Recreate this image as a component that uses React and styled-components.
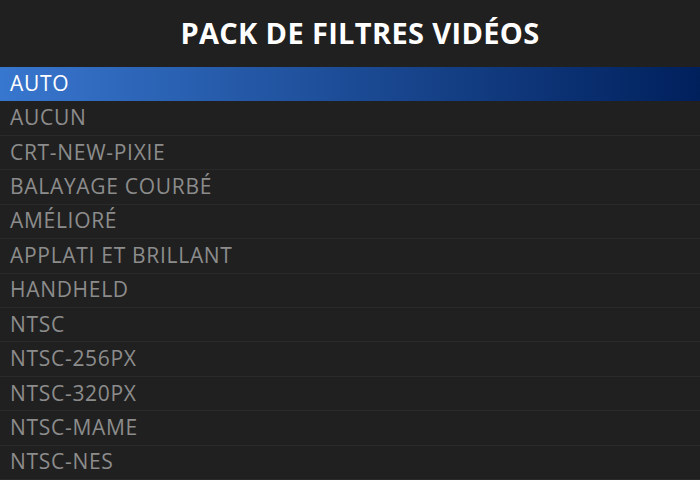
import React from "react";
import styled, { createGlobalStyle } from "styled-components";

const GlobalStyle = createGlobalStyle`
  html, body {
    margin: 0;
    padding: 0;
    background: #202020;
  }
`;

const FILTERS = [
  "AUTO",
  "AUCUN",
  "CRT-NEW-PIXIE",
  "BALAYAGE COURBÉ",
  "AMÉLIORÉ",
  "APPLATI ET BRILLANT",
  "HANDHELD",
  "NTSC",
  "NTSC-256PX",
  "NTSC-320PX",
  "NTSC-MAME",
  "NTSC-NES",
];

const Root = styled.div`
  width: 700px;
  height: 480px;
  display: flex;
  flex-direction: column;
  overflow: hidden;
  background: #202020;
  font-family: "Open Sans", "Noto Sans", sans-serif;
`;

const Header = styled.div`
  height: 67px;
  flex-shrink: 0;
  display: flex;
  align-items: center;
  justify-content: center;
  padding-left: 20px;
`;

const Title = styled.div`
  color: #ffffff;
  font-size: 29px;
  font-weight: 700;
  letter-spacing: 0.35px;
  padding-bottom: 2px;
`;

const List = styled.div`
  flex: 1;
  display: flex;
  flex-direction: column;
`;

const Row = styled.div`
  flex: 1;
  display: flex;
  align-items: center;
  padding: 0 0 2px 10px;
  font-size: 21px;
  letter-spacing: 0.7px;
  color: ${(p) => (p.$selected ? "#ffffff" : "#8c8c8c")};
  background: ${(p) =>
    p.$selected ? "linear-gradient(to right, #3877cf, #00205c)" : "transparent"};
  border-bottom: 1px solid ${(p) => (p.$selected ? "transparent" : "#2a2a2a")};
  white-space: nowrap;
`;

const App = () => {
  return (
    <Root>
      <GlobalStyle />
      <Header>
        <Title>PACK DE FILTRES VIDÉOS</Title>
      </Header>
      <List>
        {FILTERS.map((name, i) => (
          <Row key={name} $selected={i === 0}>
            {name}
          </Row>
        ))}
      </List>
    </Root>
  );
};

export default App;
